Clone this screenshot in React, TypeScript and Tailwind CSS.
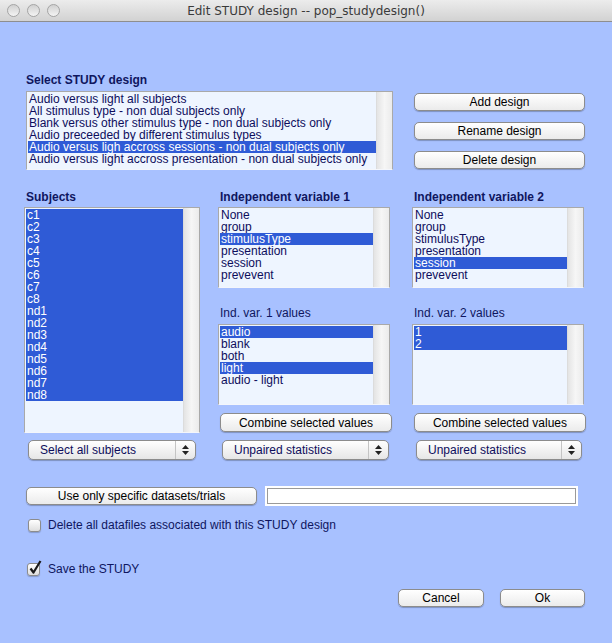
import React from 'react';

const FONT = { fontFamily: '"Liberation Sans", Arial, sans-serif' };

type ListProps = { items: string[]; selected: number[]; className: string };

function ListBox({ items, selected, className }: ListProps) {
  return (
    <div className={`flex border border-[#a9a9a9] border-b-[#f4f6fb] bg-[#eef5ff] ${className}`}>
      <div className="flex-1 flex flex-col pt-[1px] pl-[1px]">
        {items.map((it, i) => (
          <div
            key={i}
            className={`h-[12px] leading-[12px] text-[12px] pl-[1px] whitespace-nowrap ${
              selected.includes(i) ? 'bg-[#2f5bd6] text-white' : 'text-[#0d0d5c]'
            }`}
          >
            {it}
          </div>
        ))}
      </div>
      <div className="w-[16px] border-l border-[#dcdcdc] bg-gradient-to-r from-[#e4e4e4] via-[#f6f6f6] to-[#ebebeb]" />
    </div>
  );
}

function Button({ label, className }: { label: string; className: string }) {
  return (
    <div
      className={`flex items-center justify-center rounded-[5px] border border-[#8c8c8c] bg-gradient-to-b from-white to-[#ebebeb] shadow-[0_1px_1px_rgba(0,0,0,0.25)] text-[12px] text-black ${className}`}
    >
      {label}
    </div>
  );
}

function Popup({ label, className }: { label: string; className: string }) {
  return (
    <div
      className={`flex rounded-[5px] border border-[#8c8c8c] bg-gradient-to-b from-white to-[#e6e6e6] shadow-[0_1px_1px_rgba(0,0,0,0.25)] text-[12px] text-[#0d0d5c] ${className}`}
    >
      <div className="flex-1 flex items-center pl-[11px]">{label}</div>
      <div className="w-[20px] border-l border-[#c4c4c4] flex flex-col items-center justify-center gap-[2px]">
        <svg width="7" height="4" viewBox="0 0 7 4"><path d="M3.5 0 L7 4 L0 4 Z" fill="#222" /></svg>
        <svg width="7" height="4" viewBox="0 0 7 4"><path d="M0 0 L7 0 L3.5 4 Z" fill="#222" /></svg>
      </div>
    </div>
  );
}

function CheckBox({ checked }: { checked?: boolean }) {
  return (
    <div className="relative w-[13px] h-[13px] rounded-[3px] border border-[#8c8c8c] bg-gradient-to-b from-white to-[#dedede] shadow-[0_1px_1px_rgba(0,0,0,0.2)]">
      {checked && (
        <svg className="absolute left-[1px] top-[-4px]" width="13" height="15" viewBox="0 0 13 15">
          <path d="M1.5 8.5 L4.5 12.5 L11.5 1" stroke="#1a1a1a" strokeWidth="2.2" fill="none" strokeLinejoin="round" />
        </svg>
      )}
    </div>
  );
}

const VARS = ['None', 'group', 'stimulusType', 'presentation', 'session', 'prevevent'];
const SUBJECTS = ['c1', 'c2', 'c3', 'c4', 'c5', 'c6', 'c7', 'c8', 'nd1', 'nd2', 'nd3', 'nd4', 'nd5', 'nd6', 'nd7', 'nd8'];
const DESIGNS = [
  'Audio versus light all subjects',
  'All stimulus type - non dual subjects only',
  'Blank versus other stimulus type - non dual subjects only',
  'Audio preceeded by different stimulus types',
  'Audio versus ligh accross sessions - non dual subjects only',
  'Audio versus light accross presentation - non dual subjects only',
];

export default function App() {
  return (
    <div className="w-[612px] h-[643px] bg-[#a8c1ff] flex flex-col overflow-hidden" style={FONT}>
      {/* window title bar */}
      <div className="relative h-[22px] flex items-center justify-center border-b border-[#8e8e8e] bg-gradient-to-b from-[#ececec] to-[#d2d2d2]">
        <div className="absolute left-[7px] top-[4px] flex gap-[7px]">
          {[0, 1, 2].map(i => (
            <div
              key={i}
              className="w-[13px] h-[13px] rounded-full border border-[#a4a4a4] bg-gradient-to-b from-[#d0d0d0] to-[#f4f4f4]"
            />
          ))}
        </div>
        <span className="text-[12px] text-[#3a3a3a] pt-[1px]" style={{ fontFamily: '"DejaVu Sans", sans-serif' }}>
          Edit STUDY design -- pop_studydesign()
        </span>
      </div>

      <div className="flex flex-col pl-[24px]">
        {/* study design selection */}
        <div className="flex mt-[51px]">
          <div className="flex flex-col ml-[2px]">
            <div className="h-[14px] leading-[14px] text-[12px] font-bold text-[#0f1660]">Select STUDY design</div>
            <ListBox items={DESIGNS} selected={[4]} className="mt-[4px] w-[367px] h-[79px]" />
          </div>
          <div className="flex flex-col gap-[11px] ml-[21px] mt-[20px]">
            <Button label="Add design" className="w-[171px] h-[18px]" />
            <Button label="Rename design" className="w-[171px] h-[18px]" />
            <Button label="Delete design" className="w-[171px] h-[18px]" />
          </div>
        </div>

        {/* subjects and variables */}
        <div className="flex mt-[20px]">
          <div className="flex flex-col w-[176px]">
            <div className="ml-[2px] h-[14px] leading-[14px] text-[12px] font-bold text-[#0f1660]">Subjects</div>
            <ListBox items={SUBJECTS} selected={SUBJECTS.map((_, i) => i)} className="mt-[3px] w-[176px] h-[226px]" />
            <Popup label="Select all subjects" className="mt-[7px] ml-[4px] w-[168px] h-[20px]" />
          </div>

          <div className="flex flex-col ml-[18px] w-[172px]">
            <div className="ml-[2px] h-[14px] leading-[14px] text-[12px] font-bold text-[#0f1660]">Independent variable 1</div>
            <ListBox items={VARS} selected={[2]} className="mt-[3px] w-[172px] h-[81px]" />
            <div className="ml-[2px] mt-[18px] h-[14px] leading-[14px] text-[12px] text-[#0f1660]">Ind. var. 1 values</div>
            <ListBox items={['audio', 'blank', 'both', 'light', 'audio - light']} selected={[0, 3]} className="mt-[4px] w-[172px] h-[81px]" />
            <Button label="Combine selected values" className="mt-[8px] ml-[2px] w-[172px] h-[19px]" />
            <Popup label="Unpaired statistics" className="mt-[8px] ml-[4px] w-[167px] h-[20px]" />
          </div>

          <div className="flex flex-col ml-[22px] w-[172px]">
            <div className="ml-[2px] h-[14px] leading-[14px] text-[12px] font-bold text-[#0f1660]">Independent variable 2</div>
            <ListBox items={VARS} selected={[4]} className="mt-[3px] w-[172px] h-[81px]" />
            <div className="ml-[2px] mt-[18px] h-[14px] leading-[14px] text-[12px] text-[#0f1660]">Ind. var. 2 values</div>
            <ListBox items={['1', '2']} selected={[0, 1]} className="mt-[4px] w-[172px] h-[81px]" />
            <Button label="Combine selected values" className="mt-[8px] ml-[2px] w-[172px] h-[19px]" />
            <Popup label="Unpaired statistics" className="mt-[8px] ml-[4px] w-[166px] h-[20px]" />
          </div>
        </div>

        {/* dataset subset */}
        <div className="flex items-center mt-[26px] ml-[2px]">
          <Button label="Use only specific datasets/trials" className="w-[231px] h-[18px]" />
          <div className="ml-[8px] w-[313px] h-[20px] border-2 border-white">
            <div className="w-full h-full border border-[#9a9a9a] bg-white" />
          </div>
        </div>

        <div className="flex items-center mt-[12px] ml-[4px] h-[14px]">
          <CheckBox />
          <span className="ml-[7px] text-[12px] text-[#0f1660]">Delete all datafiles associated with this STUDY design</span>
        </div>

        <div className="flex items-center mt-[30px] ml-[3px] h-[14px]">
          <CheckBox checked />
          <span className="ml-[8px] text-[12px] text-[#0f1660]">Save the STUDY</span>
        </div>

        <div className="flex mt-[13px] ml-[374px] gap-[16px]">
          <Button label="Cancel" className="w-[86px] h-[18px]" />
          <Button label="Ok" className="w-[85px] h-[18px]" />
        </div>
      </div>
    </div>
  );
}
